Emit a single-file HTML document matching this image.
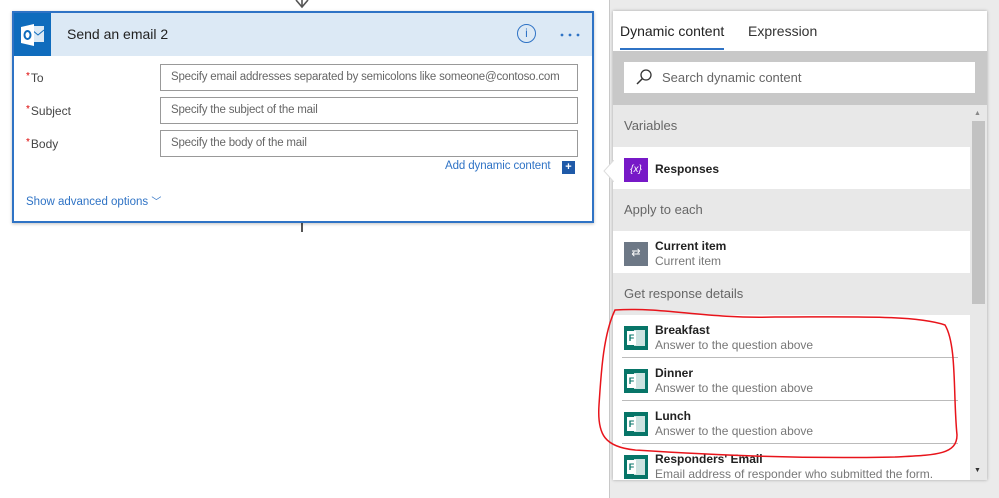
<!DOCTYPE html>
<html><head><style>
*{box-sizing:border-box;margin:0;padding:0}
body{width:999px;height:498px;overflow:hidden;background:#fff;font-family:"Liberation Sans",sans-serif;position:relative;font-size:12px;color:#333}
.abs{position:absolute}
.card{left:12px;top:11px;width:582px;height:212px;border:2px solid #2f73c5;background:#fff;box-shadow:0 1px 3px rgba(0,0,0,.25)}
.hdr{left:0;top:0;width:578px;height:43px;background:#dce9f5}
.lbl{left:12px;font-size:12px;color:#444}
.lbl b{color:#d00;font-weight:normal;font-size:10px;vertical-align:top;margin-right:1px}
.inp{left:146px;width:418px;height:27px;border:1px solid #999;font-size:11.5px;letter-spacing:-.2px;color:#666;padding:6px 10px;white-space:nowrap;overflow:hidden}
.right{left:609px;top:0;width:390px;height:498px;background:#ebebeb;border-left:1px solid #c8c8c8}
.sec{left:613px;width:357px;height:42px;background:#e8e8e8;color:#666;font-size:13px;padding:13px 11px}
.row{left:613px;width:357px;height:43px;background:#fff}
.ic{position:absolute;left:11px;top:11px;width:24px;height:24px}
.t1{position:absolute;left:42px;top:8px;font-size:12px;font-weight:bold;color:#222}
.t2{position:absolute;left:42px;top:23px;font-size:12px;color:#777}
.fi{background:#077568}
.fi:before{content:"";position:absolute;left:10px;top:4px;width:11px;height:16px;background:#fff;opacity:.8}
.fi:after{content:"F";position:absolute;left:3px;top:5px;width:9px;height:14px;background:#fff;color:#077568;font:bold 9px "Liberation Sans";text-align:center;line-height:14px}
.sep{position:absolute;left:9px;right:12px;bottom:0;border-bottom:1px solid #bbb}
</style></head><body>
<svg class="abs" style="left:292px;top:0" width="20" height="10"><path d="M4 0 L10 7 L16 0 M10 7 V0" stroke="#555" stroke-width="1.6" fill="none"/></svg>
<div class="abs" style="left:301px;top:222px;width:2px;height:10px;background:#555"></div>
<div class="abs card">
 <div class="abs hdr"></div>
 <div class="abs" style="left:0;top:0;width:37px;height:43px;background:#0f6cbd"></div>
 <svg class="abs" style="left:6px;top:9px" width="26" height="26"><path d="M12 4 H24 V20 H12 Z" fill="#fff" opacity=".85"/><path d="M12 8 L18 13 L24 8" stroke="#0f6cbd" fill="none"/><path d="M1 5 L14 2 V24 L1 21 Z" fill="#fff"/><ellipse cx="7.5" cy="13" rx="3" ry="4" fill="none" stroke="#0f6cbd" stroke-width="2"/></svg>
 <div class="abs" style="left:53px;top:13px;font-size:14px;color:#222">Send an email 2</div>
 <div class="abs" style="left:503px;top:11px;width:19px;height:19px;border:1.5px solid #2f73c5;border-radius:50%;color:#2f73c5;text-align:center;font-size:12px;line-height:16px">i</div>
 <svg class="abs" style="left:545px;top:19px" width="22" height="6"><circle cx="3" cy="3" r="1.4" fill="#2f73c5"/><circle cx="11" cy="3" r="1.4" fill="#2f73c5"/><circle cx="19" cy="3" r="1.4" fill="#2f73c5"/></svg>
 <div class="abs lbl" style="top:58px"><b>*</b>To</div>
 <div class="abs lbl" style="top:91px"><b>*</b>Subject</div>
 <div class="abs lbl" style="top:124px"><b>*</b>Body</div>
 <div class="abs inp" style="top:51px">Specify email addresses separated by semicolons like someone@contoso.com</div>
 <div class="abs inp" style="top:84px">Specify the subject of the mail</div>
 <div class="abs inp" style="top:117px">Specify the body of the mail</div>
 <div class="abs" style="left:431px;top:147px;color:#2f73c5;font-size:11.5px;letter-spacing:-.1px">Add dynamic content</div>
 <div class="abs" style="left:548px;top:148px;width:13px;height:13px;background:#1f5aa8;color:#fff;font-size:11px;line-height:12px;text-align:center;font-weight:bold">+</div>
 <div class="abs" style="left:12px;top:180px;color:#2f73c5;font-size:11.5px">Show advanced options <span style="font-size:10px">﹀</span></div>
</div>
<div class="abs right"></div>
<div class="abs" style="left:613px;top:11px;width:374px;height:469px;background:#fff;box-shadow:0 0 3px rgba(0,0,0,.3)"></div>
<div class="abs" style="left:620px;top:23px;font-size:14px;color:#222">Dynamic content</div>
<div class="abs" style="left:620px;top:48px;width:104px;height:2px;background:#2f73c5"></div>
<div class="abs" style="left:748px;top:23px;font-size:14px;color:#333">Expression</div>
<div class="abs" style="left:613px;top:51px;width:374px;height:54px;background:#c8c8c8"></div>
<div class="abs" style="left:624px;top:62px;width:351px;height:31px;background:#fff"></div>
<svg class="abs" style="left:635px;top:68px" width="18" height="18"><circle cx="11" cy="7" r="5" stroke="#333" stroke-width="1.3" fill="none"/><path d="M7.5 10.5 L2 16" stroke="#333" stroke-width="1.5"/></svg>
<div class="abs" style="left:662px;top:70px;font-size:13px;color:#666">Search dynamic content</div>
<div class="abs" style="left:970px;top:105px;width:17px;height:375px;background:#e8e8e8"></div>
<div class="abs" style="left:972px;top:121px;width:13px;height:183px;background:#c2c2c2"></div>
<div class="abs" style="left:974px;top:110px;font-size:7px;color:#888">▲</div>
<div class="abs" style="left:974px;top:467px;font-size:7px;color:#333">▼</div>
<div class="abs sec" style="top:105px">Variables</div>
<div class="abs row" style="top:147px"><div class="ic" style="background:#7719c7;color:#fff;font-size:10px;text-align:center;line-height:23px;font-style:italic">{x}</div><div class="t1" style="top:15px">Responses</div></div>
<svg class="abs" style="left:602px;top:160px" width="12" height="22"><path d="M12 0 L2 11 L12 22" fill="#fff" stroke="#ddd"/></svg>
<div class="abs sec" style="top:189px">Apply to each</div>
<div class="abs row" style="top:231px"><div class="ic" style="background:#6d7886;color:#fff;font-size:11px;text-align:center;line-height:23px">⇄</div><div class="t1">Current item</div><div class="t2">Current item</div></div>
<div class="abs sec" style="top:273px">Get response details</div>
<div class="abs row" style="top:315px"><div class="ic fi"></div><div class="t1">Breakfast</div><div class="t2">Answer to the question above</div><div class="sep"></div></div>
<div class="abs row" style="top:358px"><div class="ic fi"></div><div class="t1">Dinner</div><div class="t2">Answer to the question above</div><div class="sep"></div></div>
<div class="abs row" style="top:401px"><div class="ic fi"></div><div class="t1">Lunch</div><div class="t2">Answer to the question above</div><div class="sep"></div></div>
<div class="abs row" style="top:444px;height:36px;overflow:hidden"><div class="ic fi"></div><div class="t1">Responders' Email</div><div class="t2">Email address of responder who submitted the form.</div></div>
<svg class="abs" style="left:595px;top:305px" width="375" height="160"><path d="M20 5 C70 2 110 14 180 12 C260 12 320 10 350 20 C362 40 358 90 362 130 C362 150 340 150 300 152 C200 154 120 150 40 145 C10 142 2 130 4 100 C6 70 8 30 20 5 Z" fill="none" stroke="#e8141b" stroke-width="1.5"/></svg>
</body></html>
